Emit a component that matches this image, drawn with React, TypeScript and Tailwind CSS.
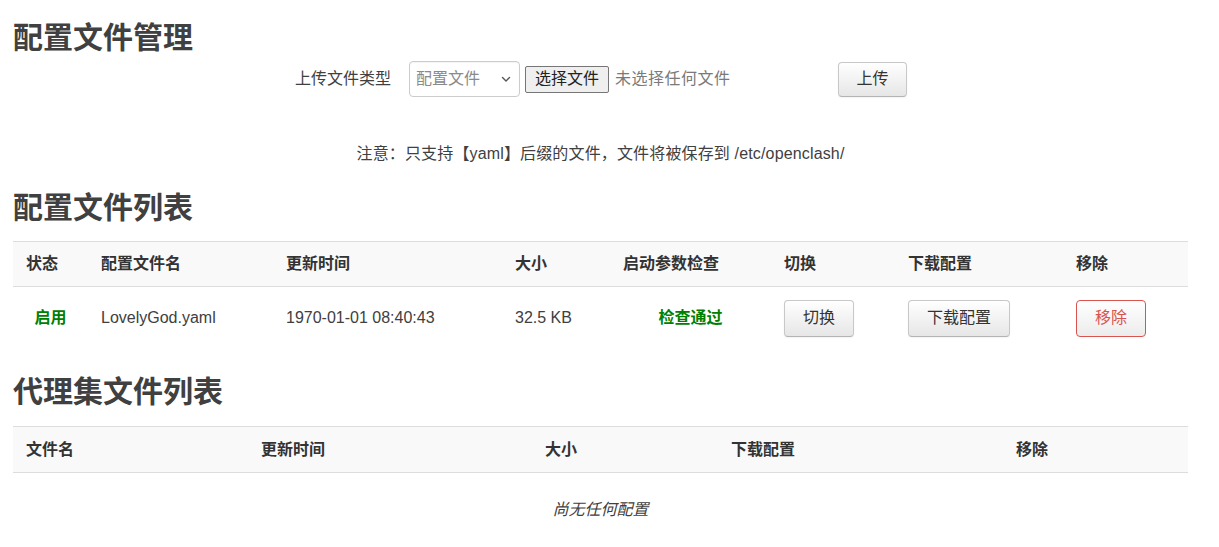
import React from "react";

const font = {
  fontFamily: '"Liberation Sans", "Noto Sans CJK SC", sans-serif',
};

const btn =
  "flex items-center justify-center rounded-[4px] border border-[#c8c8c8] border-b-[#b3b3b3] bg-gradient-to-b from-white to-[#e6e6e6] text-[16px] text-[#333] shadow-[inset_0_1px_0_rgba(255,255,255,0.2),0_1px_2px_rgba(0,0,0,0.05)]";

function Chevron() {
  return (
    <svg width="12" height="12" viewBox="0 0 12 12" fill="none">
      <path d="M2.5 4.5 L6 8 L9.5 4.5" stroke="#555" strokeWidth="1.4" strokeLinecap="round" strokeLinejoin="round" />
    </svg>
  );
}

export default function App() {
  const t1 = [
    { h: "状态", w: "w-[75px]" },
    { h: "配置文件名", w: "w-[185px]" },
    { h: "更新时间", w: "w-[229px]" },
    { h: "大小", w: "w-[108px]" },
    { h: "启动参数检查", w: "w-[161px]" },
    { h: "切换", w: "w-[124px]" },
    { h: "下载配置", w: "w-[168px]" },
    { h: "移除", w: "w-[125px]" },
  ];
  const t2 = [
    { h: "文件名", w: "w-[235px]" },
    { h: "更新时间", w: "w-[284px]" },
    { h: "大小", w: "w-[186px]" },
    { h: "下载配置", w: "w-[285px]" },
    { h: "移除", w: "w-[185px]" },
  ];
  return (
    <div style={font} className="w-[1219px] h-[547px] overflow-hidden bg-white text-[16px] text-[#404040] px-[13px]">
      <h1 className="mt-[20px] h-[36px] leading-[36px] text-[30px] font-bold text-[#404040]">配置文件管理</h1>

      <div className="mt-[5px] flex items-center h-[36px]">
        <div className="w-[378px] text-right leading-[20px]">上传文件类型</div>
        <div className="ml-[18px] w-[111px] h-[36px] rounded-[4px] border border-[#cccccc] bg-white flex items-center justify-between pl-[6px] pr-[7px] shadow-[inset_0_1px_1px_rgba(0,0,0,0.05)]">
          <span className="text-[#8a8a8a]">配置文件</span>
          <Chevron />
        </div>
        <div className="ml-[5px] w-[313px] flex items-center">
          <div className="h-[27px] px-[9px] flex items-center rounded-[2px] border border-[#767676] bg-[#efefef] text-[#222]">选择文件</div>
          <span className="ml-[6px] text-[#7a7a7a] tracking-[0.5px]">未选择任何文件</span>
        </div>
        <div className={`${btn} w-[69px] h-[35px]`}>上传</div>
      </div>

      <p className="mt-[47px] h-[20px] leading-[20px] text-center w-[1175px] tracking-[0.15px]">
        注意：只支持【yaml】后缀的文件，文件将被保存到 /etc/openclash/
      </p>

      <h2 className="mt-[26px] h-[36px] leading-[36px] text-[30px] font-bold text-[#404040]">配置文件列表</h2>

      <div className="mt-[15px] w-[1175px]">
        <div className="flex h-[46px] items-center bg-[#f9f9f9] border-t border-b border-[#dddddd]">
          {t1.map((c) => (
            <div key={c.h} className={`${c.w} pl-[13px] font-bold text-[#333]`}>{c.h}</div>
          ))}
        </div>
        <div className="flex h-[61px] items-center pt-[1px]">
          <div className="w-[75px] text-center font-bold text-[#008000]">启用</div>
          <div className="w-[185px] pl-[13px]">LovelyGod.yaml</div>
          <div className="w-[229px] pl-[13px]">1970-01-01 08:40:43</div>
          <div className="w-[108px] pl-[13px]">32.5 KB</div>
          <div className="w-[161px] text-center font-bold text-[#008000]">检查通过</div>
          <div className="w-[124px] pl-[13px]">
            <div className={`${btn} w-[70px] h-[37px]`}>切换</div>
          </div>
          <div className="w-[168px] pl-[13px]">
            <div className={`${btn} w-[102px] h-[37px]`}>下载配置</div>
          </div>
          <div className="w-[125px] pl-[13px]">
            <div className="flex items-center justify-center w-[70px] h-[37px] rounded-[4px] border border-[#d9534f] bg-gradient-to-b from-white to-[#ececec] text-[#d9534f]">移除</div>
          </div>
        </div>
      </div>

      <h2 className="mt-[26px] h-[36px] leading-[36px] text-[30px] font-bold text-[#404040]">代理集文件列表</h2>

      <div className="mt-[16px] w-[1175px]">
        <div className="flex h-[47px] items-center bg-[#f9f9f9] border-t border-b border-[#dddddd]">
          {t2.map((c) => (
            <div key={c.h} className={`${c.w} pl-[13px] font-bold text-[#333]`}>{c.h}</div>
          ))}
        </div>
        <div className="h-[74px] flex items-center justify-center italic text-[#404040]">尚无任何配置</div>
      </div>
    </div>
  );
}
